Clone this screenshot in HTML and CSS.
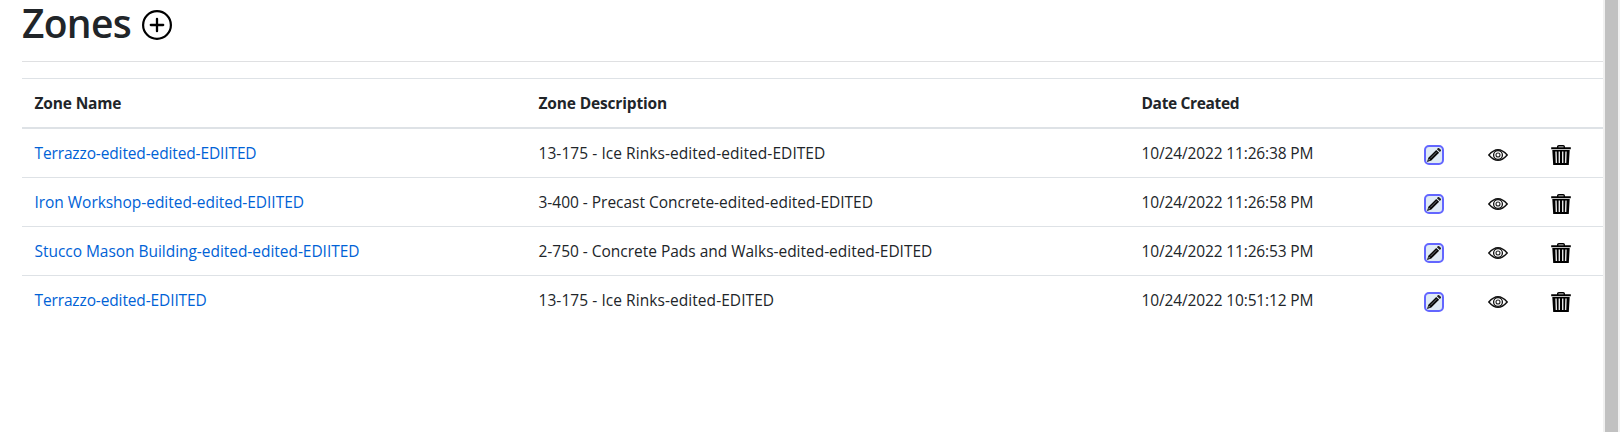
FILE: index.html
```
<!DOCTYPE html>
<html lang="en">
<head>
<meta charset="utf-8">
<title>Zones</title>
<link rel="stylesheet" href="styles.css">
</head>
<body>
<svg class="sprite" aria-hidden="true">
  <symbol id="edit" viewBox="0 0 20 20">
    <rect x="1" y="1" width="18" height="18" rx="4" fill="#e0ebf5" stroke="#6366ff" stroke-width="2"/>
    <path d="M3 17 4.4 12.7 12.2 4.9 15.1 7.8 7.3 15.6Z" fill="#0a0a0a"/>
    <path d="M12.9 4.2 14 3.1Q14.6 2.7 15.2 3.2L16.8 4.8Q17.3 5.4 16.9 6L15.8 7.1Z" fill="#222"/>
    <path d="M6.3 13.4 12.6 7.1" stroke="#a9b4bf" stroke-width=".6"/>
    <path d="M4.4 15.6 4.9 14 6 15.1Z" fill="#e0ebf5"/>
  </symbol>
  <symbol id="eye" viewBox="0 0 20 20">
    <path d="M.8 10Q10-.6 19.2 10 10 20.6.8 10Z" fill="none" stroke="#111" stroke-width="1.4"/>
    <circle cx="10" cy="10" r="4.4" fill="none" stroke="#111" stroke-width="1.3"/>
    <circle cx="10" cy="10" r="2" fill="#fff" stroke="#222" stroke-width="1.1"/>
  </symbol>
  <symbol id="trash" viewBox="0 0 20 20">
    <path d="M6.7 3V1.8Q6.7.7 7.8.7H12.2Q13.3.7 13.3 1.8V3" fill="none" stroke="#000" stroke-width="1.4"/>
    <path d="M.2 2.3H19.8V4.3H.2ZM1.3 5H18.7L17.8 20H2.2Z" fill="#000"/>
    <path d="M5 6.5 5.4 18M8.3 6.5V18M11.7 6.5V18M15 6.5 14.6 18" fill="none" stroke="#e6e6e6" stroke-width="1.4"/>
  </symbol>
</svg>
<div class="page">
  <main class="content">
    <header class="heading">
      <h1>Zones</h1>
      <svg class="add" viewBox="0 0 30 30"><circle cx="15" cy="15" r="13.9" fill="none" stroke="#000" stroke-width="2.2"/><path d="M8.8 15H21.2M15 8.8V21.2" stroke="#000" stroke-width="2.3" stroke-linecap="round"/></svg>
    </header>
    <hr>
    <div class="table">
      <div class="row head"><div>Zone Name</div><div>Zone Description</div><div class="date-head">Date Created</div></div>
      <div class="row"><a class="name tight">Terrazzo-edited-edited-EDIITED</a><div class="loose">13-175 - Ice Rinks-edited-edited-EDITED</div><div class="date">10/24/2022 11:26:38 PM</div><svg class="icon"><use href="#edit"/></svg><svg class="icon"><use href="#eye"/></svg><svg class="icon"><use href="#trash"/></svg></div>
      <div class="row"><a class="name">Iron Workshop-edited-edited-EDIITED</a><div>3-400 - Precast Concrete-edited-edited-EDITED</div><div class="date">10/24/2022 11:26:58 PM</div><svg class="icon"><use href="#edit"/></svg><svg class="icon"><use href="#eye"/></svg><svg class="icon"><use href="#trash"/></svg></div>
      <div class="row"><a class="name">Stucco Mason Building-edited-edited-EDIITED</a><div>2-750 - Concrete Pads and Walks-edited-edited-EDITED</div><div class="date">10/24/2022 11:26:53 PM</div><svg class="icon"><use href="#edit"/></svg><svg class="icon"><use href="#eye"/></svg><svg class="icon"><use href="#trash"/></svg></div>
      <div class="row"><a class="name tight">Terrazzo-edited-EDIITED</a><div class="loose">13-175 - Ice Rinks-edited-EDITED</div><div class="date">10/24/2022 10:51:12 PM</div><svg class="icon"><use href="#edit"/></svg><svg class="icon"><use href="#eye"/></svg><svg class="icon"><use href="#trash"/></svg></div>
    </div>
  </main>
  <div class="scrollbar"></div>
</div>
</body>
</html>
```
FILE: styles.css
```
* { box-sizing: border-box; }
body { margin: 0; background: #fff; color: #212529; font: 16px/24px "Open Sans", sans-serif; }
.sprite { position: absolute; width: 0; height: 0; }
.page { display: flex; height: 432px; }
.content { flex: 1; padding-left: 22px; }
.scrollbar { width: 17px; background: #c1c1c1; border: solid #f1f1f1; border-width: 0 2px; }
.heading { display: flex; height: 61px; }
h1 { margin: 0; font-size: 39px; line-height: 45px; font-weight: 600; letter-spacing: -0.7px; width: 120px; white-space: nowrap; }
.add { width: 30px; height: 30px; margin-top: 10px; }
hr { margin: 0 0 16px; border: 0; border-top: 1px solid #dfe0e2; }
.row { display: grid; grid-template-columns: 504px 603px 282.5px 63.5px 63.5px 1fr; height: 49px; padding: 12px 0 0 12.5px; border-bottom: 1px solid #dee2e6; white-space: nowrap; font-size: 15.5px; letter-spacing: -0.02px; }
.head { height: 51px; border-top: 1px solid #dee2e6; border-bottom-width: 2px; font-weight: 700; letter-spacing: -0.16px; }
.date-head { letter-spacing: -0.35px; }
.row:last-child { border-bottom: 0; }
.name { color: #0062d6; letter-spacing: -0.04px; }
.tight { letter-spacing: -0.13px; }
.loose { letter-spacing: 0.06px; }
.date { letter-spacing: -0.14px; }
.icon { width: 20px; height: 20px; margin-top: 4px; }
```
